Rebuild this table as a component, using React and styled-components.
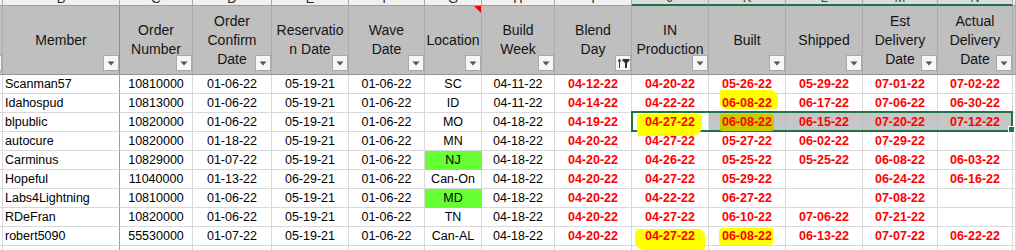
import React from 'react';
import styled, { createGlobalStyle } from 'styled-components';

const WIDTHS = [3, 117, 73, 79, 77, 76, 57, 73, 77, 77, 77, 77, 75, 75, 3];
const TEMPLATE = WIDTHS.map((w) => `${w}px`).join(' ');

const Global = createGlobalStyle`
  html, body { margin: 0; padding: 0; background: #ffffff; }
  body { font-family: "Liberation Sans", Arial, sans-serif; overflow: hidden; }
`;

const Sheet = styled.div`
  width: 1016px;
  height: 250px;
  overflow: hidden;
  background: #ffffff;
  display: flex;
  flex-direction: column;
`;

const GridRow = styled.div`
  display: grid;
  grid-template-columns: ${TEMPLATE};
  height: ${(p) => p.$h}px;
  flex: none;
  position: relative;
`;

const LetterCell = styled.div`
  box-sizing: border-box;
  height: 6px;
  overflow: hidden;
  display: flex;
  justify-content: center;
  align-items: flex-end;
  background: ${(p) => (p.$sel ? '#dcdcdc' : '#f0f0f0')};
  border-right: 1px solid #ababab;
  border-bottom: ${(p) => (p.$sel ? '2px solid #217346' : '1px solid #9f9f9f')};
`;

const Letter = styled.span`
  font-size: 13px;
  line-height: 13px;
  color: ${(p) => (p.$sel ? '#1d5e38' : '#2a2a2a')};
`;

const HeadCell = styled.div`
  position: relative;
  box-sizing: border-box;
  overflow: hidden;
  background: #bfbfbf;
  border-right: 1px solid ${(p) => (p.$freeze ? '#8e8e8e' : '#acacac')};
  border-bottom: 1px solid #969696;
  display: flex;
  align-items: center;
  justify-content: center;
  font-size: 14px;
  line-height: 19px;
  text-align: center;
  white-space: pre-line;
  color: #141414;
`;

const FilterButton = styled.div`
  position: absolute;
  right: 0;
  bottom: 3px;
  width: 16px;
  height: 16px;
  box-sizing: border-box;
  background: #f6f6f6;
  border: 1px solid #a9a9a9;
  display: flex;
  align-items: center;
  justify-content: center;
`;

const CommentMark = styled.div`
  position: absolute;
  top: 0;
  right: 0;
  width: 0;
  height: 0;
  border-top: 7px solid #ff0000;
  border-left: 7px solid transparent;
`;

const Cell = styled.div`
  box-sizing: border-box;
  border-right: 1px solid
    ${(p) => (p.$green ? '#66ff33' : p.$freeze ? '#9e9e9e' : p.$sel ? '#bdbdbd' : '#d9d9d9')};
  border-bottom: 1px solid ${(p) => (p.$green ? '#66ff33' : p.$sel ? '#bdbdbd' : '#d9d9d9')};
  background: ${(p) => (p.$green ? '#66ff33' : p.$sel ? '#c6c6c6' : '#ffffff')};
  display: flex;
  align-items: center;
  justify-content: ${(p) => (p.$left ? 'flex-start' : 'center')};
  padding-left: ${(p) => (p.$left ? 2 : 0)}px;
  font-size: 12.5px;
  font-weight: ${(p) => (p.$red ? 700 : 400)};
  color: ${(p) => (p.$red ? '#ff0000' : '#000000')};
  white-space: nowrap;
`;

const SHAPES = {
  a: { t: -6, r: -6, b: 1, l: -2, rad: '2px 9px 4px 7px / 3px 8px 3px 6px', c: '#ffff00' },
  b: { t: -1.5, r: -7, b: -6.5, l: -8, rad: '3px 4px 10px 2px / 2px 3px 9px 3px', c: '#ffff00' },
  c: { t: -1.5, r: -1.5, b: -1.5, l: -1.5, rad: '2px 3px 3px 2px', c: '#c9c900' },
  d: { t: -0.5, r: -10, b: -6.5, l: -10, rad: '6px 8px 3px 10px / 3px 6px 3px 8px', c: '#ffff00' },
  e: { t: -1.5, r: -0.5, b: -1.5, l: -2.5, rad: '5px 2px 2px 3px / 3px 2px 2px 3px', c: '#ffff00' },
};

const Mark = styled.span`
  position: relative;
  z-index: 3;
  display: inline-block;
  &::before {
    content: '';
    position: absolute;
    z-index: -1;
    top: ${(p) => SHAPES[p.$shape].t}px;
    right: ${(p) => SHAPES[p.$shape].r}px;
    bottom: ${(p) => SHAPES[p.$shape].b}px;
    left: ${(p) => SHAPES[p.$shape].l}px;
    background: ${(p) => SHAPES[p.$shape].c};
    border-radius: ${(p) => SHAPES[p.$shape].rad};
  }
`;

const Selection = styled.div`
  position: absolute;
  left: 631px;
  top: -2px;
  width: 382px;
  height: 21px;
  box-sizing: border-box;
  border: 2px solid #217346;
  z-index: 2;
  pointer-events: none;
`;

const Handle = styled.div`
  position: absolute;
  right: -4px;
  bottom: -3px;
  width: 5px;
  height: 5px;
  background: #217346;
  border: 1px solid #ffffff;
`;

const Arrow = () => (
  <svg width="8" height="5" viewBox="0 0 8 5">
    <polygon points="0.5,0.5 7.5,0.5 4,4.5" fill="#555555" />
  </svg>
);

const SortFilterIcon = () => (
  <svg width="13" height="12" viewBox="0 0 13 12">
    <line x1="2.5" y1="11" x2="2.5" y2="3" stroke="#404040" strokeWidth="1" />
    <polygon points="0.5,4.5 2.5,1.5 4.5,4.5" fill="#404040" />
    <polygon points="5.5,2 12.5,2 12.5,3.5 10,6 10,11 8,11 8,6 5.5,3.5" fill="#2f2f2f" />
  </svg>
);

const HEADERS = [
  'Member',
  'Order\nNumber',
  'Order\nConfirm\nDate',
  'Reservatio\nn Date',
  'Wave\nDate',
  'Location',
  'Build\nWeek',
  'Blend\nDay',
  'IN\nProduction',
  'Built',
  'Shipped',
  'Est\nDelivery\nDate',
  'Actual\nDelivery\nDate',
];

const LETTERS = ['B', 'C', 'D', 'E', 'F', 'G', 'H', 'I', 'J', 'K', 'L', 'M', 'N'];

const ROWS = [
  ['Scanman57', '10810000', '01-06-22', '05-19-21', '01-06-22', 'SC', '04-11-22', '04-12-22', '04-20-22', '05-26-22', '05-29-22', '07-01-22', '07-02-22'],
  ['Idahospud', '10813000', '01-06-22', '05-19-21', '01-06-22', 'ID', '04-11-22', '04-14-22', '04-22-22', '06-08-22', '06-17-22', '07-06-22', '06-30-22'],
  ['blpublic', '10820000', '01-06-22', '05-19-21', '01-06-22', 'MO', '04-18-22', '04-19-22', '04-27-22', '06-08-22', '06-15-22', '07-20-22', '07-12-22'],
  ['autocure', '10820000', '01-18-22', '05-19-21', '01-06-22', 'MN', '04-18-22', '04-20-22', '04-27-22', '05-27-22', '06-02-22', '07-29-22', ''],
  ['Carminus', '10829000', '01-07-22', '05-19-21', '01-06-22', 'NJ', '04-18-22', '04-20-22', '04-26-22', '05-25-22', '05-25-22', '06-08-22', '06-03-22'],
  ['Hopeful', '11040000', '01-13-22', '06-29-21', '01-06-22', 'Can-On', '04-18-22', '04-20-22', '04-27-22', '05-29-22', '', '06-24-22', '06-16-22'],
  ['Labs4Lightning', '10810000', '01-06-22', '05-19-21', '01-06-22', 'MD', '04-18-22', '04-20-22', '04-22-22', '06-27-22', '', '07-08-22', ''],
  ['RDeFran', '10820000', '01-06-22', '05-19-21', '01-06-22', 'TN', '04-18-22', '04-20-22', '04-27-22', '06-10-22', '07-06-22', '07-21-22', ''],
  ['robert5090', '55530000', '01-07-22', '05-19-21', '01-06-22', 'Can-AL', '04-18-22', '04-20-22', '04-27-22', '06-08-22', '06-13-22', '07-07-22', '06-22-22'],
];

const MARKS = { '1-9': 'a', '2-8': 'b', '2-9': 'c', '8-8': 'd', '8-9': 'e' };
const GREEN = { '4-5': true, '6-5': true };
const SELECTED_ROW = 2;

export default function App() {
  return (
    <>
      <Global />
      <Sheet>
        <GridRow $h={6}>
          <LetterCell />
          {LETTERS.map((l, i) => (
            <LetterCell key={l} $sel={i >= 8}>
              <Letter $sel={i >= 8}>{l}</Letter>
            </LetterCell>
          ))}
          <LetterCell />
        </GridRow>

        <GridRow $h={69}>
          <HeadCell>
            <FilterButton>
              <Arrow />
            </FilterButton>
          </HeadCell>
          {HEADERS.map((h, i) => (
            <HeadCell key={h} $freeze={i === 0}>
              {h}
              {i === 5 && <CommentMark />}
              <FilterButton>{i === 7 ? <SortFilterIcon /> : <Arrow />}</FilterButton>
            </HeadCell>
          ))}
          <HeadCell />
        </GridRow>

        {ROWS.map((row, r) => (
          <GridRow key={r} $h={19}>
            <Cell />
            {row.map((v, c) => {
              const key = `${r}-${c}`;
              const shape = MARKS[key];
              return (
                <Cell
                  key={c}
                  $left={c === 0}
                  $freeze={c === 0}
                  $red={c >= 7}
                  $green={GREEN[key]}
                  $sel={r === SELECTED_ROW && c >= 9}
                >
                  {shape ? <Mark $shape={shape}>{v}</Mark> : v}
                </Cell>
              );
            })}
            <Cell />
            {r === SELECTED_ROW && (
              <Selection>
                <Handle />
              </Selection>
            )}
          </GridRow>
        ))}

        <GridRow $h={19}>
          {WIDTHS.map((w, i) => (
            <Cell key={i} $freeze={i === 1} />
          ))}
        </GridRow>
      </Sheet>
    </>
  );
}
